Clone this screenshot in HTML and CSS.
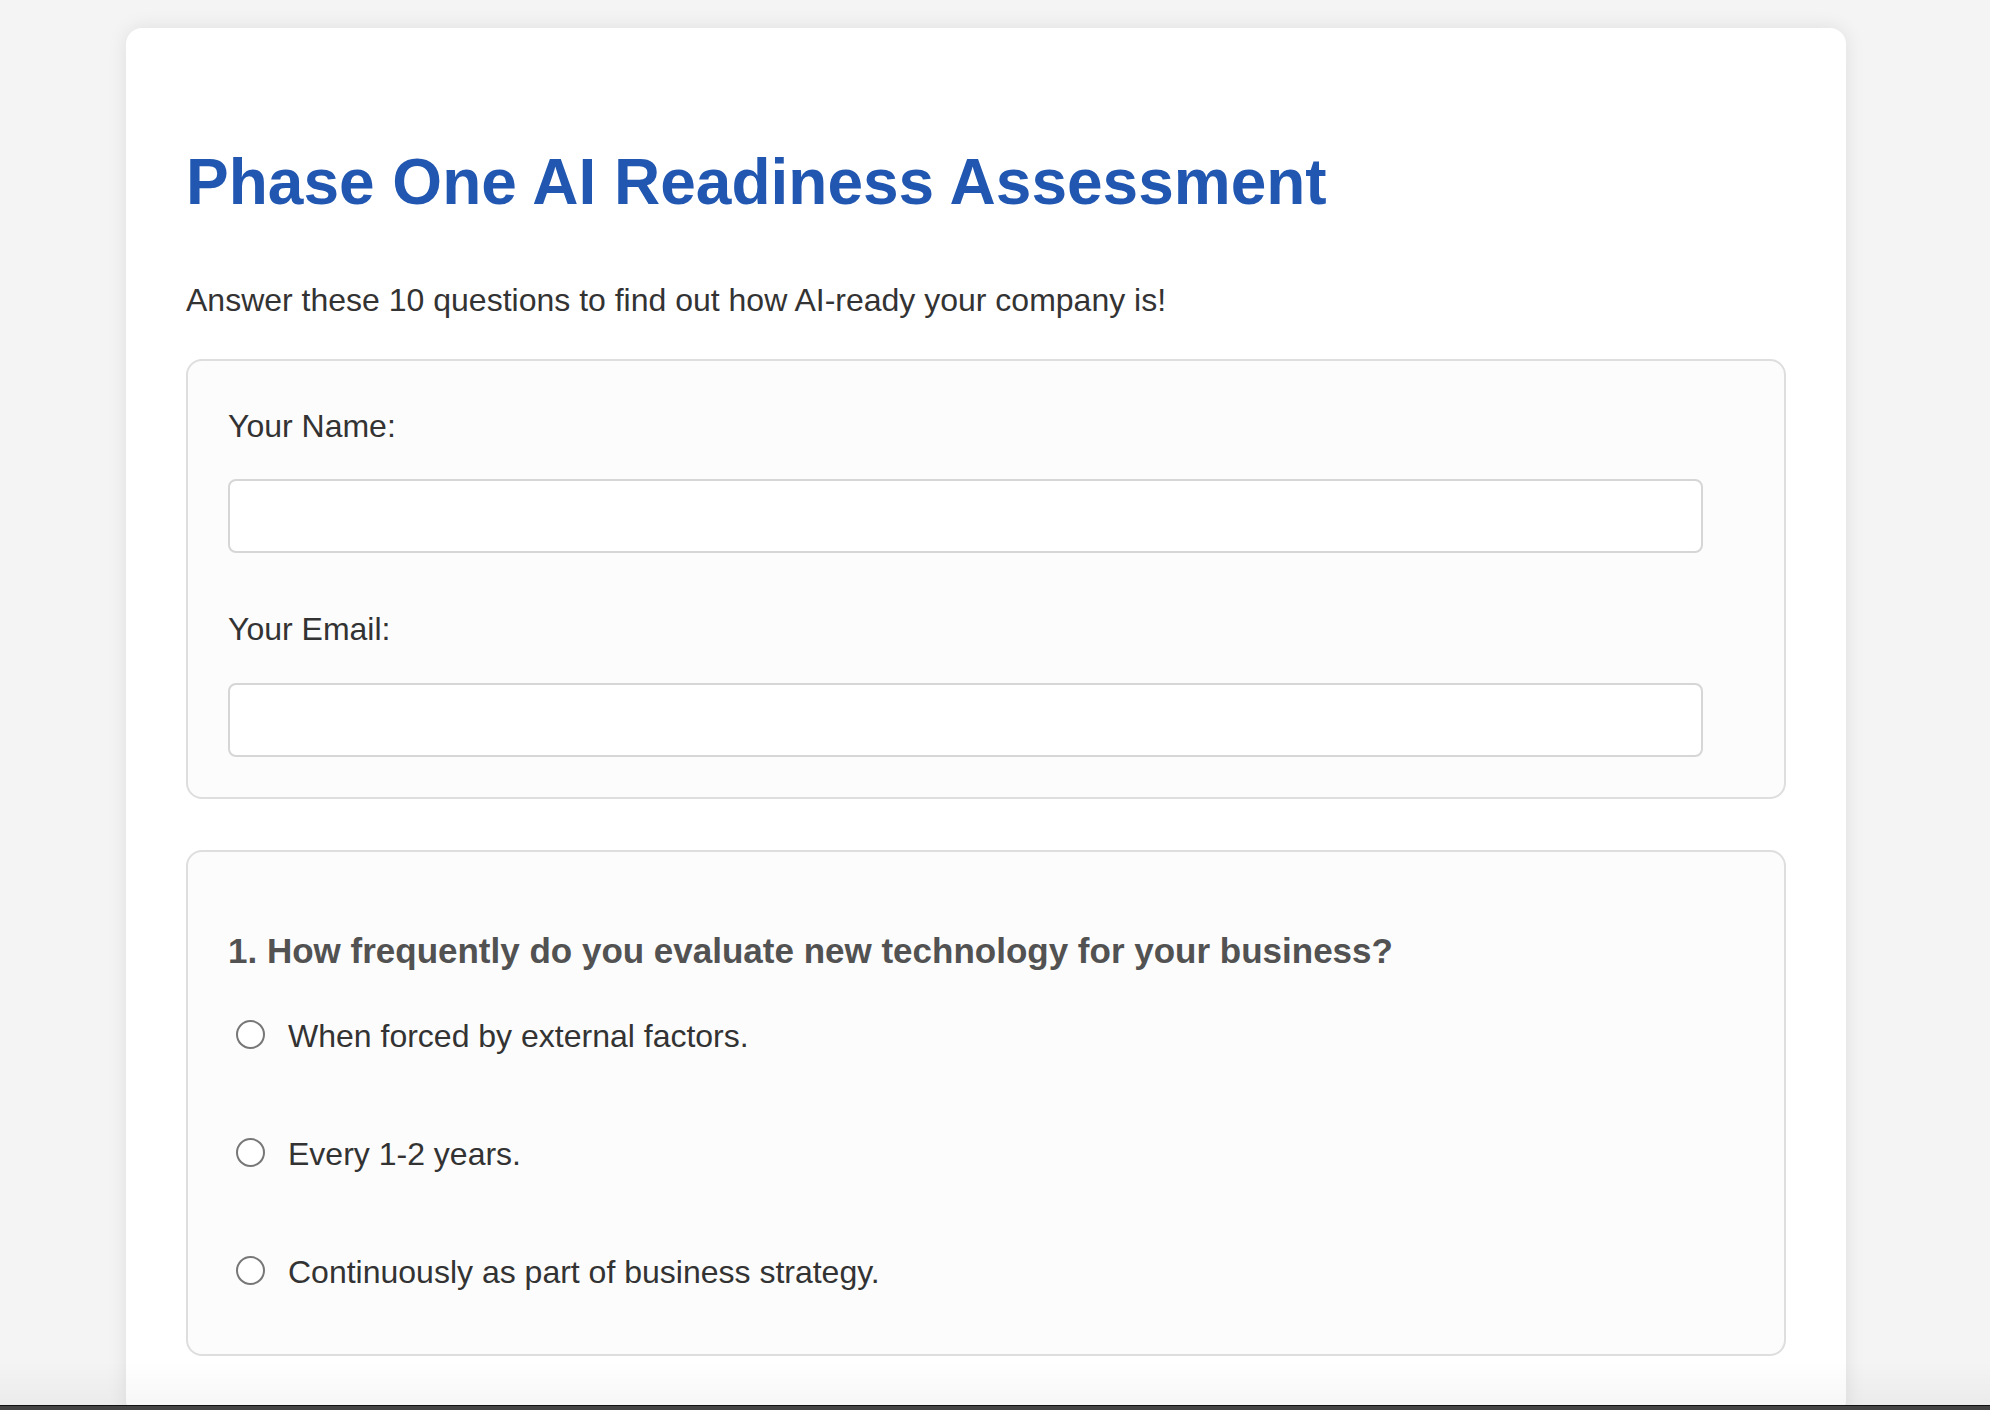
FILE: index.html
```html
<!DOCTYPE html>
<html lang="en">
<head>
<meta charset="utf-8">
<title>Phase One AI Readiness Assessment</title>
<link rel="stylesheet" href="styles.css">
</head>
<body>
<main class="card">
  <h1 class="title">Phase One AI Readiness Assessment</h1>
  <p class="intro">Answer these 10 questions to find out how AI-ready your company is!</p>

  <section class="panel">
    <label class="field-label" for="name">Your Name:</label>
    <input class="field-input" type="text" id="name" name="name">
    <label class="field-label" for="email">Your Email:</label>
    <input class="field-input last" type="email" id="email" name="email">
  </section>

  <section class="panel question">
    <h3 class="q-title">1. How frequently do you evaluate new technology for your business?</h3>
    <label class="option"><input class="radio" type="radio" name="q1" value="1"><span>When forced by external factors.</span></label>
    <label class="option"><input class="radio" type="radio" name="q1" value="2"><span>Every 1-2 years.</span></label>
    <label class="option"><input class="radio" type="radio" name="q1" value="3"><span>Continuously as part of business strategy.</span></label>
  </section>
</main>
<div class="bottom-fade"></div>
<div class="bottom-bar"></div>
</body>
</html>
```
FILE: styles.css
```css
html, body {
  margin: 0;
  padding: 0;
}
body {
  background: #f4f4f4;
  font-family: "Liberation Sans", Arial, Helvetica, sans-serif;
  color: #333333;
  font-size: 32px;
  line-height: 51.2px;
}
.card {
  box-sizing: border-box;
  width: 1720px;
  margin: 28px 0 0 126px;
  padding: 60px 60px 60px 60px;
  background: #ffffff;
  border-radius: 16px;
  box-shadow: 0 0 20px rgba(0, 0, 0, 0.09);
}
.title {
  margin: 57px 0 56px 0;
  font-size: 64px;
  line-height: 74px;
  font-weight: 700;
  color: #2157b0;
}
.intro {
  margin: 0 0 33px 0;
}
.panel {
  border: 2px solid #dedede;
  border-radius: 16px;
  background: #fcfcfc;
  padding: 40px 40px 40px 40px;
}
.panel.question {
  margin-top: 51px;
  padding-bottom: 40px;
}
.field-label {
  display: block;
  margin-bottom: 27px;
}
.field-input {
  display: block;
  box-sizing: border-box;
  width: 1475px;
  height: 74px;
  margin: 0 0 51px 0;
  border: 2px solid #d6d6d6;
  border-radius: 8px;
  background: #ffffff;
  font: inherit;
  outline: none;
}
.field-input.last {
  margin-bottom: 0;
}
.q-title {
  margin: 39px 0 24px 0;
  font-size: 35px;
  line-height: 40px;
  font-weight: 700;
  color: #525252;
}
.option {
  display: flex;
  align-items: center;
  padding: 16px 0;
  margin-bottom: 35px;
}
.option:last-child {
  margin-bottom: 0;
}
.radio {
  -webkit-appearance: none;
  appearance: none;
  box-sizing: border-box;
  width: 29px;
  height: 29px;
  margin: -4px 23px 0 8px;
  border: 2px solid #777777;
  border-radius: 50%;
  background: #ffffff;
  flex: none;
}
.bottom-fade {
  position: fixed;
  left: 0;
  right: 0;
  bottom: 4px;
  height: 44px;
  background: linear-gradient(to bottom, rgba(0,0,0,0), rgba(0,0,0,0.035));
  pointer-events: none;
}
.bottom-bar {
  position: fixed;
  left: 0;
  right: 0;
  bottom: 0;
  height: 4px;
  background: #444444;
  border-top: 1px solid #111111;
}
```
